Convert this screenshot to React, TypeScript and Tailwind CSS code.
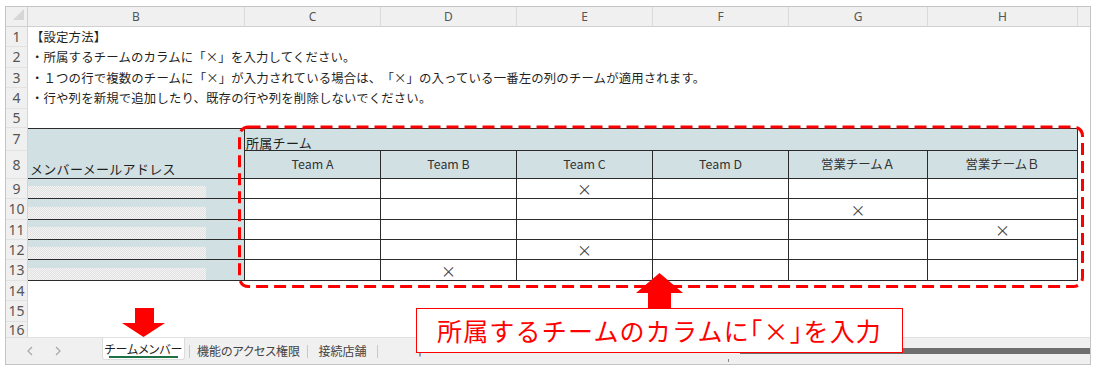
import React from "react";

const teams = ["Team A", "Team B", "Team C", "Team D", "営業チームＡ", "営業チームＢ"];
const marks = [2, 4, 5, 2, 1];
const texts = [
  "【設定方法】",
  "・所属するチームのカラムに「×」を入力してください。",
  "・１つの行で複数のチームに「×」が入力されている場合は、「×」の入っている一番左の列のチームが適用されます。",
  "・行や列を新規で追加したり、既存の行や列を削除しないでください。",
  "",
];
const letters = ["B", "C", "D", "E", "F", "G", "H"];

function RH({ n, last }: { n: number; last?: boolean }) {
  return (
    <div
      className={
        last
          ? "bg-[#f0f0f0] border-r border-r-[#d4d4d4] flex items-end justify-center text-[14px] leading-[14px] text-[#555] font-['Noto_Sans',sans-serif]"
          : "bg-[#f0f0f0] border-r border-b border-r-[#d4d4d4] border-b-[#e2e2e2] flex items-center justify-center text-[14px] leading-none text-[#555] font-['Noto_Sans',sans-serif]"
      }
    >
      {n}
    </div>
  );
}

export default function App() {
  return (
    <div className="relative w-[1098px] h-[374px] bg-white pt-[6px] pl-[5px] overflow-hidden font-['Noto_Sans_CJK_JP',sans-serif] [text-spacing-trim:space-all]">
      <div className="w-[1086px] h-[359px] border border-[#c4c4c4] flex flex-col bg-white">
        <div className="grid grid-cols-[22px_217px_136px_136px_136px_136px_139px_150px_12px] grid-rows-[20px_20px_21px_20px_21px_19px_23px_28px_20px_21px_20px_20px_21px_20px_21px_15px]">
          {/* header row */}
          <div className="bg-[#f0f0f0] border-r border-b border-[#d0d0d0] flex items-end justify-end pr-[3px] pb-[6px]">
            <div className="w-0 h-0 border-l-[11px] border-l-transparent border-b-[11px] border-b-[#d6d6d6]" />
          </div>
          {letters.map((l) => (
            <div
              key={l}
              className="bg-[#f0f0f0] border-r border-b border-r-[#dadada] border-b-[#d0d0d0] flex items-center justify-center text-[12px] text-[#555] font-['Noto_Sans',sans-serif]"
            >
              {l}
            </div>
          ))}
          <div className="bg-[#f0f0f0] border-b border-[#d0d0d0]" />

          {/* rows 1-5 */}
          {texts.map((t, i) => (
            <React.Fragment key={i}>
              <RH n={i + 1} />
              <div className="flex items-center pl-[3px] whitespace-nowrap text-[12.4px] leading-none tracking-[0.15px] text-[#1f1f1f]">
                {t}
              </div>
              <div className="col-span-7" />
            </React.Fragment>
          ))}

          {/* row 7 */}
          <RH n={7} />
          <div className="row-span-2 bg-[#d1e0e3] border-t border-b border-r border-[#2b2b2b] flex items-end pl-[2px] pb-[1px] text-[13px] leading-[16px] tracking-[0.3px] text-[#1f1f1f] whitespace-nowrap">
            メンバーメールアドレス
          </div>
          <div className="col-span-6 bg-[#d1e0e3] border-t border-b border-r border-[#2b2b2b] flex items-end pl-[1px] text-[13px] leading-[15px] tracking-[0.3px] text-[#1f1f1f]">
            所属チーム
          </div>
          <div />

          {/* row 8 */}
          <RH n={8} />
          {teams.map((t) => (
            <div
              key={t}
              className="bg-[#d1e0e3] border-r border-b border-[#2b2b2b] flex items-center justify-center text-[12.4px] text-[#333] leading-none"
            >
              {t}
            </div>
          ))}
          <div />

          {/* rows 9-13 */}
          {marks.map((m, r) => (
            <React.Fragment key={r}>
              <RH n={r + 9} />
              <div className="bg-[#d1e0e3] border-r border-b border-[#2b2b2b] flex flex-col justify-end">
                <div className="w-[178px] h-[12px] bg-[repeating-conic-gradient(#e0e0e0_0%_25%,#f4f4f4_0%_50%)] bg-[length:2px_2px]" />
              </div>
              {teams.map((t, c) => (
                <div
                  key={t}
                  className="bg-white border-r border-b border-[#2b2b2b] flex items-center justify-center text-[15px] leading-none text-[#444]"
                >
                  {c === m ? "×" : ""}
                </div>
              ))}
              <div />
            </React.Fragment>
          ))}

          {/* rows 14-16 */}
          {[14, 15, 16].map((n) => (
            <React.Fragment key={n}>
              <RH n={n} last={n === 16} />
              <div className="col-span-8" />
            </React.Fragment>
          ))}
        </div>

        {/* sheet tab bar */}
        <div className="h-[27px] bg-[#f0f0f0] border-t border-[#e0e0e0] flex items-stretch">
          <div className="w-[96px] flex items-center pl-[18px] gap-[16px]">
            <svg width="12" height="10" viewBox="0 0 12 10">
              <polyline points="8,1 4,5 8,9" fill="none" stroke="#a8a8a8" strokeWidth="1.2" />
            </svg>
            <svg width="12" height="10" viewBox="0 0 12 10">
              <polyline points="4,1 8,5 4,9" fill="none" stroke="#a8a8a8" strokeWidth="1.2" />
            </svg>
          </div>
          <div className="w-[83px] h-[22px] bg-white border-x border-b border-[#dcdcdc] rounded-b-[3px] flex flex-col items-center pt-[3px]">
            <div className="text-[12px] leading-[15px] text-[#1f1f1f] [font-feature-settings:'palt']">
              チームメンバー
            </div>
            <div className="w-[69px] h-[2px] bg-[#1e7145]" />
          </div>
          <div className="w-[1px] h-[13px] bg-[#c8c8c8] self-center ml-[4px]" />
          <div className="w-[117px] flex items-center justify-center text-[12px] text-[#444] [font-feature-settings:'palt']">
            機能のアクセス権限
          </div>
          <div className="w-[1px] h-[13px] bg-[#c8c8c8] self-center" />
          <div className="w-[69px] flex items-center justify-center text-[12px] text-[#444] [font-feature-settings:'palt']">
            接続店舗
          </div>
          <div className="w-[1px] h-[13px] bg-[#c8c8c8] self-center" />
          <div className="w-[84px] flex items-center justify-center text-[16px] leading-none text-[#666]">
            +
          </div>
          <div className="flex-1" />
          <div className="w-[362px] flex items-center">
            <div className="w-[1px] h-[3px] bg-[#888] self-end mb-[2px]" />
            <div className="ml-[11px] flex-1 h-[6px] bg-[#6f6f6f]" />
          </div>
        </div>
      </div>

      {/* annotations */}
      <svg className="absolute left-0 top-0 pointer-events-none" width="1098" height="374">
        <rect
          x="239.5"
          y="127"
          width="843"
          height="159.5"
          rx="9"
          fill="none"
          stroke="#ff0000"
          strokeWidth="3"
          strokeDasharray="12 6"
        />
        <polygon points="659.5,273 683,293 671,293 671,308 648,308 648,293 636,293" fill="#ff0000" />
        <polygon points="135,308 154,308 154,323 165,323 143.5,337 122,323 135,323" fill="#ff0000" />
      </svg>
      <div className="absolute left-[416px] top-[308px] w-[487px] h-[45px] border border-[#ff0000] bg-white flex items-center justify-center text-[25px] leading-none tracking-[1.2px] text-[#ff0000] whitespace-nowrap">
        所属するチームのカラムに｢×｣を入力
      </div>
    </div>
  );
}
